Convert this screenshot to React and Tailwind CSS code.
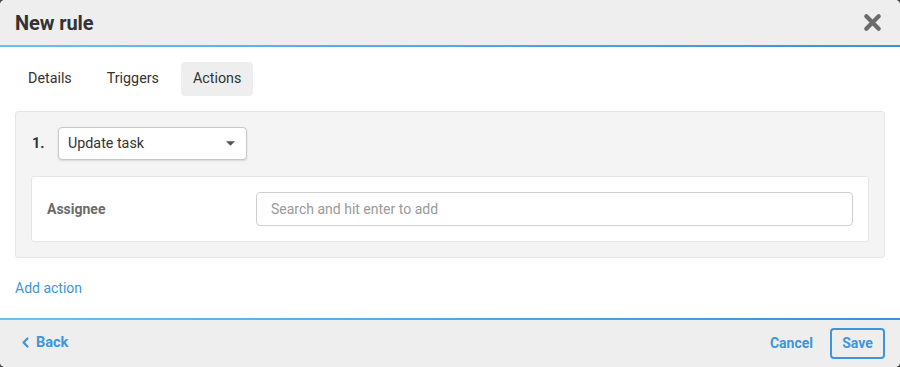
import React from 'react';

const blueLine = 'h-[2px] bg-gradient-to-r from-[#6cc0ea] to-[#3f8fd2]';

const App = () => {
  return (
    <div className="w-[900px] h-[367px] bg-[#4a4a4a] font-['Roboto',sans-serif]">
      <div className="w-full h-full bg-white rounded-[5px] overflow-hidden flex flex-col">
        {/* header */}
        <div className="h-[45px] bg-[#eeeeee] flex items-center justify-between pl-[15px] pr-[18px]">
          <h1 className="text-[20px] font-bold text-[#333] tracking-[-0.1px]">New rule</h1>
          <svg viewBox="0 0 20 20" className="w-[19px] h-[19px]" fill="none" stroke="#6b6b6b" strokeWidth="4.5" strokeLinecap="round">
            <path d="M3.5 3.5 L16.5 16.5 M16.5 3.5 L3.5 16.5" />
          </svg>
        </div>
        <div className={blueLine} />

        {/* body */}
        <div className="flex-1 px-[15px] pt-[15px]">
          <div className="flex items-center gap-[9px] text-[14.3px] text-[#333]">
            <button className="h-[34px] px-[13px] rounded-[4px]">Details</button>
            <button className="h-[34px] px-[13px] rounded-[4px]">Triggers</button>
            <button className="h-[34px] px-[12px] rounded-[4px] bg-[#eeeeee]">Actions</button>
          </div>

          <div className="mt-[15px] bg-[#f4f4f4] border border-[#e6e6e6] rounded-[3px] px-[15px] pt-[15px] pb-[15px]">
            <div className="flex items-center">
              <span className="text-[14.5px] font-bold text-[#333] w-[27px] pl-[1px]">1.</span>
              <div className="w-[189px] h-[33px] bg-white border border-[#c8c8c8] rounded-[4px] shadow-[0_1px_2px_rgba(0,0,0,0.12)] flex items-center justify-between pl-[9px] pr-[11px]">
                <span className="text-[14.3px] text-[#333]">Update task</span>
                <svg viewBox="0 0 10 5" className="w-[9px] h-[5px]" fill="#555">
                  <path d="M0 0 L10 0 L5 5 Z" />
                </svg>
              </div>
            </div>

            <div className="mt-[16px] bg-white border border-[#e6e6e6] rounded-[3px] h-[66px] flex items-center pl-[15px] pr-[15px]">
              <span className="w-[209px] text-[14px] font-bold text-[#6b6b6b]">Assignee</span>
              <div className="flex-1 h-[34px] border border-[#cfcfcf] rounded-[4px] flex items-center pl-[14px]">
                <span className="text-[14px] text-[#9a9a9a]">Search and hit enter to add</span>
              </div>
            </div>
          </div>

          <div className="mt-[20px] text-[14px] text-[#3d96dc]">Add action</div>
        </div>

        {/* footer */}
        <div className={blueLine} />
        <div className="h-[47px] bg-[#eeeeee] flex items-center justify-between pl-[22px] pr-[15px]">
          <div className="flex items-center gap-[7px] text-[14.5px] font-bold text-[#3d96dc] -mt-[2px]">
            <svg viewBox="0 0 8 12" className="w-[7px] h-[11px]" fill="none" stroke="#3d96dc" strokeWidth="2.6" strokeLinecap="round" strokeLinejoin="round">
              <path d="M6.2 1.5 L1.8 6 L6.2 10.5" />
            </svg>
            <span>Back</span>
          </div>
          <div className="flex items-center gap-[17px]">
            <span className="text-[14px] font-bold text-[#3d96dc]">Cancel</span>
            <button className="w-[55px] h-[31px] border-2 border-[#3d96dc] rounded-[4px] text-[14px] font-bold text-[#3d96dc]">Save</button>
          </div>
        </div>
      </div>
    </div>
  );
};

export default App;
